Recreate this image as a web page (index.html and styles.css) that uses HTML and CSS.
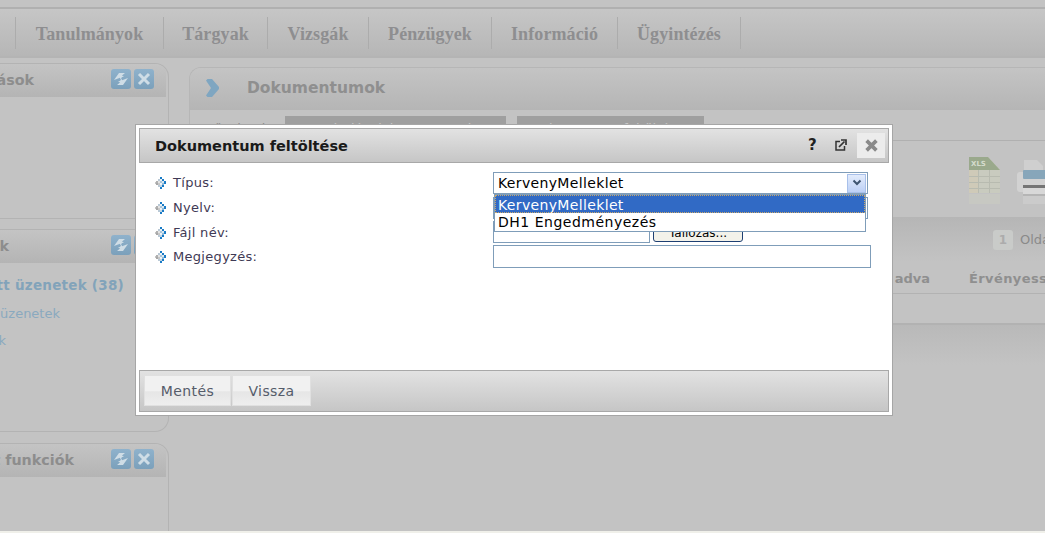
FILE: index.html
```html
<!DOCTYPE html>
<html lang="hu">
<head>
<meta charset="utf-8">
<title>Dokumentum feltöltése</title>
<link rel="stylesheet" href="styles.css">
</head>
<body>
<svg class="defs" width="0" height="0" aria-hidden="true">
  <symbol id="bullet" viewBox="0 0 12 12">
    <rect x="5" y="0" width="2" height="2" fill="#1a7bc6"/>
    <rect x="3" y="2" width="2" height="2" fill="#b9c9d6"/>
    <rect x="7" y="2" width="2" height="2" fill="#1a7bc6"/>
    <rect x="5" y="2" width="2" height="2" fill="#eef2f5"/>
    <rect x="1" y="4" width="2" height="2" fill="#b0b0b0"/>
    <rect x="3" y="4" width="2" height="2" fill="#e4e4e4"/>
    <rect x="5" y="4" width="2" height="2" fill="#a9c4d9"/>
    <rect x="7" y="4" width="2" height="2" fill="#dbe7ef"/>
    <rect x="9" y="4" width="2" height="3" fill="#1a7bc6"/>
    <rect x="0" y="5" width="1" height="2" fill="#c4c4c4"/>
    <rect x="1" y="6" width="2" height="2" fill="#a8a8a8"/>
    <rect x="3" y="6" width="2" height="2" fill="#c8c8c8"/>
    <rect x="5" y="6" width="2" height="2" fill="#eef2f5"/>
    <rect x="7" y="6" width="2" height="2" fill="#8db9da"/>
    <rect x="3" y="8" width="2" height="2" fill="#b9c9d6"/>
    <rect x="5" y="8" width="2" height="2" fill="#c2d5e3"/>
    <rect x="7" y="8" width="2" height="2" fill="#1a7bc6"/>
    <rect x="5" y="10" width="2" height="2" fill="#1a7bc6"/>
  </symbol>
  <symbol id="refresh" viewBox="0 0 20 20">
    <path d="M3 11 8 4h6l-3 2.500 2 1.200-2 .3-1.500 2.500L9 8.800z M17 9l-5 7H6l3-2.500L7 12.300l2-.3 1.500-2.500L11 11.200z" fill="#cfdde6"/>
  </symbol>
  <symbol id="cross" viewBox="0 0 20 20">
    <path d="M5 5l10 10M15 5 5 15" stroke="#cfdde6" stroke-width="3" fill="none"/>
  </symbol>
</svg>
<div class="page">
  <div class="topstrip"></div>
  <nav class="nav">
    <a class="nav-item first"></a>
    <a class="nav-item w148">Tanulmányok</a>
    <a class="nav-item w104">Tárgyak</a>
    <a class="nav-item w101">Vizsgák</a>
    <a class="nav-item w123">Pénzügyek</a>
    <a class="nav-item w126">Információ</a>
    <a class="nav-item w123">Ügyintézés</a>
  </nav>
  <div class="content">
    <aside class="sidebar">
      <section class="side-panel p1">
        <header class="side-head">
          <span class="side-title t1">Beállítások</span>
          <span class="tool"><svg width="20" height="20"><use href="#refresh"/></svg></span>
          <span class="tool"><svg width="20" height="20"><use href="#cross"/></svg></span>
        </header>
      </section>
      <section class="side-panel p2">
        <header class="side-head">
          <span class="side-title t2">Üzenetek</span>
          <span class="tool"><svg width="20" height="20"><use href="#refresh"/></svg></span>
          <span class="tool"><svg width="20" height="20"><use href="#cross"/></svg></span>
        </header>
        <ul class="side-list">
          <li class="strong">Beérkezett üzenetek (38)</li>
          <li class="l2">Elküldött üzenetek</li>
          <li class="l3">Címlisták</li>
        </ul>
      </section>
      <section class="side-panel p3">
        <header class="side-head">
          <span class="side-title t3">Kedvelt funkciók</span>
          <span class="tool"><svg width="20" height="20"><use href="#refresh"/></svg></span>
          <span class="tool"><svg width="20" height="20"><use href="#cross"/></svg></span>
        </header>
      </section>
    </aside>
    <main class="main">
      <div class="main-panel">
        <header class="main-head">
          <svg class="chev" viewBox="0 0 13 18" width="13" height="18"><path d="M0 1.500 1.500 0H6l7 8v2l-7 8H1.500L0 16.500 5 9z" fill="#7fa6c1"/></svg>
          <h1>Dokumentumok</h1>
        </header>
        <div class="tabs">
          <span class="tabs-label">Műveletek:</span>
          <span class="tab tab1">Hozzáadás dokumentumok</span>
          <span class="tab tab2">Dokumentum feltöltése</span>
        </div>
        <div class="tools">
          <svg class="xls" viewBox="0 0 31 48" width="31" height="48">
            <path d="M0 0h19l12 13v23H0z" fill="#c9cbbf"/>
            <path d="M0 0h19l12 13H0z" fill="#9aa98c"/>
            <rect x="0" y="13" width="9" height="23" fill="#cfcab8"/>
            <path d="M0 19.500h31M0 25.500h31M0 31.500h31M9.500 13v23M20.500 13v23" stroke="#b8bbb0"/>
            <rect x="0" y="37" width="31" height="10" fill="#c7c8c2"/>
            <text x="2" y="9" class="xls-text">XLS</text>
          </svg>
          <svg class="printer" viewBox="0 0 30 48" width="30" height="48">
            <path d="M7 3h13l6 6v5H7z" fill="#cfcfcf"/>
            <rect x="0" y="15" width="30" height="20" rx="3" fill="#d2d2d2"/>
            <rect x="6" y="13" width="24" height="9" rx="1" fill="#87a6ba"/>
            <rect x="6" y="28" width="24" height="3" fill="#757575"/>
            <rect x="6" y="31" width="24" height="6" fill="#d8d8d8"/>
            <rect x="6" y="37" width="24" height="2" fill="#b5b5b5"/>
            <rect x="6" y="39" width="24" height="8" fill="#cbcbcb"/>
          </svg>
        </div>
        <div class="grid-bar">
          <span class="page-num">1</span>
          <span class="page-label">Oldal</span>
        </div>
        <div class="grid-head">
          <span class="col c1">Feltöltve adva</span>
          <span class="col c2">Érvényesség</span>
        </div>
        <div class="grid-row"></div>
        <div class="grid-foot"></div>
      </div>
    </main>
  </div>
</div>

<div class="modal">
  <div class="modal-head">
    <h2>Dokumentum feltöltése</h2>
    <span class="head-icon q">?</span>
    <svg class="head-icon popout" viewBox="0 0 12 12" width="12" height="12"><path d="M5 2.500H1v8.500h8.500V7" stroke="#333" stroke-width="1.500" fill="none"/><path d="M4 8l5.500-5.500M6 1h5v5" stroke="#333" stroke-width="1.700" fill="none"/></svg>
    <span class="close"><svg viewBox="0 0 12 12" width="13" height="13"><path d="M1.500 1.500l9 9M10.500 1.500l-9 9" stroke="#8a8a8a" stroke-width="3.400"/></svg></span>
  </div>
  <div class="modal-body">
    <div class="row r1">
      <label class="label"><svg class="bullet" width="12" height="12"><use href="#bullet"/></svg>Típus:</label>
      <div class="select s1"><span>KervenyMelleklet</span><span class="arrow"><svg viewBox="0 0 10 8" width="10" height="8"><path d="M1.500 1.500 5 5l3.500-3.500" stroke="#3d5470" stroke-width="2" fill="none"/></svg></span></div>
    </div>
    <div class="row r2">
      <label class="label"><svg class="bullet" width="12" height="12"><use href="#bullet"/></svg>Nyelv:</label>
      <div class="select s2"></div>
    </div>
    <div class="row r3">
      <label class="label"><svg class="bullet" width="12" height="12"><use href="#bullet"/></svg>Fájl név:</label>
      <div class="file"></div>
      <button class="browse">Tallózás...</button>
    </div>
    <div class="row r4">
      <label class="label"><svg class="bullet" width="12" height="12"><use href="#bullet"/></svg>Megjegyzés:</label>
      <div class="note"></div>
    </div>
    <ul class="dropdown">
      <li class="selected">KervenyMelleklet</li>
      <li>DH1 Engedményezés</li>
    </ul>
  </div>
  <div class="modal-foot">
    <button class="btn b1">Mentés</button>
    <button class="btn b2">Vissza</button>
  </div>
</div>
</body>
</html>
```
FILE: styles.css
```css
* { box-sizing: border-box; }
html, body { margin: 0; padding: 0; height: 533px; overflow: hidden; }
body { background: #f0f0ea; font-family: "DejaVu Sans", Verdana, sans-serif; }
.defs { position: absolute; }
.page { height: 531px; background: #c3c3c3; overflow: hidden; }

.topstrip { background: #c3c3c3; border-bottom: 2px solid #b0b0b0; height: 9px; }
.nav { height: 49px; display: flex; background: linear-gradient(#c6c6c6, #b6b6b6); border-bottom: 2px solid #b4b4b4; }
.nav-item { height: 32px; margin-top: 8px; padding-top: 7px; font: bold 18px "Liberation Serif", serif; letter-spacing: 0.100px; color: #8e8e90; text-align: center; border-right: 1px solid #acacac; }
.first { width: 16px; }
.w148 { width: 148px; }
.w104 { width: 104px; }
.w101 { width: 101px; }
.w123 { width: 123px; }
.w126 { width: 126px; }

.content { display: flex; }
.sidebar { width: 169px; flex: none; }
.side-panel { border: 1px solid #b3b3b3; border-left: 0; border-radius: 0 14px 14px 0; overflow: hidden; }
.p1 { margin-top: 5px; height: 156px; }
.p2 { margin-top: 10px; height: 203px; }
.p3 { margin-top: 11px; height: 100px; border-bottom: 0; border-radius: 0 14px 0 0; }
.side-head { height: 33px; width: 166px; display: flex; align-items: center; justify-content: flex-end; gap: 3px; padding: 0 12px 3px 0; background: linear-gradient(#c4c4c4, #b4b4b4); overflow: hidden; position: relative; }
.side-title { font-weight: bold; font-size: 14.300px; color: #8d8d8d; white-space: nowrap; position: absolute; top: 8px; }
.t1 { right: 132px; }
.t2 { right: 157px; }
.t3 { right: 92px; }
.tool { width: 20px; height: 20px; border-radius: 3px; background: linear-gradient(#8fb2cc, #7ba0bb); display: block; }
.tool svg { display: block; }
.side-list { list-style: none; margin: 0; padding: 0; position: relative; height: 110px; font-size: 13px; color: #8aa9bf; }
.side-list li { position: absolute; white-space: nowrap; }
.strong { font-weight: bold; font-size: 13.500px; letter-spacing: 0.250px; right: 44px; top: 14px; color: #82a3ba; }
.l2 { right: 108px; top: 43px; }
.l3 { right: 162px; top: 70px; }

.main { flex: 1; padding: 9px 0 0 20px; min-width: 0; }
.main-panel { border: 1px solid #b6b6b6; border-right: 0; border-bottom: 0; border-radius: 12px 0 0 0; height: 304px; overflow: hidden; }
.main-head { height: 42px; background: linear-gradient(#c4c4c4, #b5b5b5); display: flex; align-items: center; padding: 0 0 2px 16px; }
.main-head h1 { margin: 0 0 0 28px; font-size: 15.500px; font-weight: bold; color: #8f8f8f; }
.tabs { height: 31px; padding-top: 6px; display: flex; font-size: 13px; line-height: 15px; color: #8a8a8a; border-bottom: 1px solid #b0b0b0; }
.tabs-label { width: 95px; padding: 5px 0 0 12px; }
.tab { height: 22px; background: #9f9f9f; color: #c9c9c9; padding: 5px 0 0 14px; white-space: nowrap; overflow: hidden; }
.tab1 { width: 221px; margin-right: 11px; }
.tab2 { width: 187px; }
.tools { height: 77px; display: flex; align-items: flex-start; gap: 17px; padding: 16px 0 0 779px; overflow: hidden; border-bottom: 1px solid #b6b6b6; }
.xls, .printer { flex: none; }
.xls-text { font: bold 7px "DejaVu Sans", sans-serif; fill: #d5dccd; }
.grid-bar { height: 44px; position: relative; background: linear-gradient(#b6b6b6, #c3c3c3); }
.page-num { position: absolute; left: 803px; top: 12px; width: 20px; height: 20px; border-radius: 3px; background: #c9cbc9; text-align: center; font-size: 12px; font-weight: bold; line-height: 20px; color: #acacac; }
.page-label { position: absolute; left: 830px; top: 14px; font-size: 13px; color: #8a8a8a; white-space: nowrap; }
.grid-head { height: 32px; position: relative; border-bottom: 1px solid #b2b2b2; font-size: 13px; font-weight: bold; color: #8f8f8f; }
.col { position: absolute; top: 9px; white-space: nowrap; }
.c1 { right: 115px; }
.c2 { left: 779px; letter-spacing: 0.400px; }
.grid-row { height: 31px; border-bottom: 2px solid #b2b2b2; }
.grid-foot { height: 40px; background: linear-gradient(#b9b9b9, #c3c3c3); }

.modal { position: absolute; left: 135px; top: 124px; width: 758px; height: 292px; background: #fff; border: 1px solid #a6a6a6; padding: 3px; display: flex; flex-direction: column; }
.modal-head { height: 35px; flex: none; border: 1px solid #a8a8a8; background: linear-gradient(#e2e2e2, #c6c6c6); display: flex; align-items: center; position: relative; padding-left: 15px; }
.modal-head h2 { margin: 0; font-size: 14.500px; font-weight: bold; color: #1a1a1a; flex: 1; }
.head-icon { position: absolute; }
.q { left: 668px; top: 7px; font-weight: bold; font-size: 15px; color: #222; }
.popout { left: 695px; top: 10px; }
.close { position: absolute; left: 717px; top: 4px; width: 28px; height: 25px; background: #ececec; display: flex; align-items: center; justify-content: center; }

.modal-body { flex: 1; position: relative; padding-top: 9px; }
.row { display: flex; align-items: flex-start; font-size: 13px; color: #3f3a55; }
.r1 { height: 25px; }
.r2 { height: 24px; }
.r3 { height: 24px; }
.r4 { height: 24px; }
.r1 .label, .r2 .label { margin-top: -1px; }
.r1 .label { margin-bottom: 1px; }
.label { width: 354px; flex: none; padding-left: 16px; display: flex; align-items: center; gap: 6px; height: 22px; letter-spacing: 0.300px; }
.bullet { flex: none; margin-top: 2px; }
.select { width: 375px; height: 22px; border: 1px solid #7f9db9; background: #fff; font-size: 14px; letter-spacing: 0.350px; color: #000; display: flex; align-items: center; justify-content: space-between; padding: 0 1px 0 4px; }
.arrow { width: 19px; height: 19px; background: linear-gradient(#e3ecfc, #bcd0f6); border: 1px solid #a8c0ea; display: flex; align-items: center; justify-content: center; }
.file { width: 157px; height: 22px; border: 1px solid #7f9db9; background: #fff; }
.browse { margin: 3px 0 0 3px; width: 90px; height: 18px; padding: 0; border: 1px solid #1e3f72; border-radius: 3px; background: #f3f2ea; font: 12px "DejaVu Sans", sans-serif; color: #000; }
.note { width: 378px; height: 23px; border: 1px solid #7f9db9; background: #fff; }
.dropdown { position: absolute; left: 355px; top: 31px; width: 372px; height: 38px; margin: 0; padding: 0; list-style: none; border: 1px solid #7f9db9; background: #fff; font-size: 14px; letter-spacing: 0.500px; color: #000; }
.dropdown li { height: 18px; line-height: 18px; padding-left: 3px; }
.dropdown .selected { background: #316ac5; color: #fff; line-height: 20px; letter-spacing: 0.350px; outline: 1px dotted #c9a86a; outline-offset: -1px; }

.modal-foot { height: 42px; flex: none; border: 1px solid #a8a8a8; background: linear-gradient(#e2e2e2, #c6c6c6); padding: 4px 0 0 4px; display: flex; gap: 1px; }
.btn { height: 31px; border: 1px solid #e0e0e0; background: linear-gradient(#f1f1f1 50%, #e6e6e6 55%, #eeeeee); font: 14px "DejaVu Sans", sans-serif; letter-spacing: 0.400px; color: #555c6a; padding: 0; }
.b1 { width: 87px; }
.b2 { width: 79px; }
```
